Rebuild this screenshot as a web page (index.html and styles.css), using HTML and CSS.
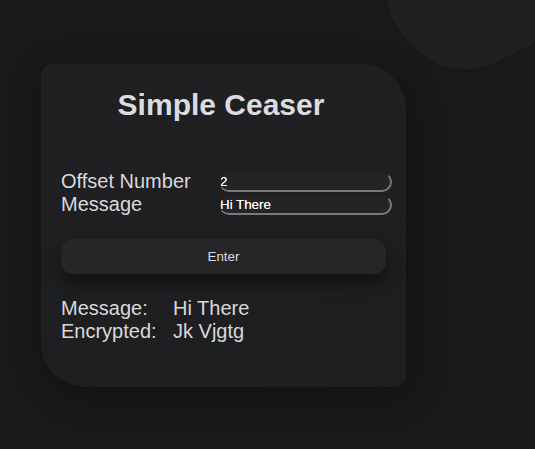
FILE: index.html
```html
<!DOCTYPE html>
<html>
<head>
<meta charset="utf-8">
<title>Simple Ceaser</title>
<link rel="stylesheet" href="styles.css">
</head>
<body>
<svg class="blob" width="157" height="72" viewBox="0 0 157 72" aria-hidden="true">
  <path d="M8 0 C18 35 45 65 82 69 C104 71 130 58 157 42 L157 0 Z" fill="#202022"/>
</svg>
<main class="card">
  <h1 class="title">Simple Ceaser</h1>
  <form class="form">
    <label class="label" for="offset">Offset Number</label>
    <input class="field" id="offset" type="text" value="2">
    <label class="label" for="msg">Message</label>
    <input class="field" id="msg" type="text" value="Hi There">
  </form>
  <button class="btn" type="button">Enter</button>
  <div class="result">
    <span>Message:</span><span>Hi There</span>
    <span>Encrypted:</span><span>Jk Vjgtg</span>
  </div>
</main>
</body>
</html>
```
FILE: styles.css
```css
html, body {
  margin: 0;
  padding: 0;
  background: #19191b;
  height: 100%;
  overflow: hidden;
}
body {
  position: relative;
  font-family: "Liberation Sans", Arial, sans-serif;
  color: #d9d9dd;
  padding: 64px 0 0 41px;
  box-sizing: border-box;
}
.blob {
  position: absolute;
  right: 0;
  top: 0;
  display: block;
}
.card {
  position: relative;
  box-sizing: border-box;
  width: 365px;
  height: 323px;
  padding: 24px 14px 0 20px;
  background: linear-gradient(160deg, #202022 0%, #1d1e20 100%);
  border-radius: 12px 45px 12px 45px;
  box-shadow: 4px 8px 30px rgba(0, 0, 0, 0.35);
}
.title {
  margin: 0;
  padding-right: 11px;
  font-size: 30px;
  line-height: 34px;
  font-weight: bold;
  text-align: center;
  color: #dcdce0;
}
.form {
  margin-top: 48px;
  display: grid;
  grid-template-columns: 158px 1fr;
  grid-auto-rows: 23px;
}
.label {
  font-size: 20px;
  line-height: 23px;
  color: #d9d9dd;
}
.field {
  align-self: center;
  box-sizing: border-box;
  height: 20px;
  margin: 0;
  padding: 0;
  width: 100%;
  background: #242426;
  color: #ffffff;
  font-family: "Liberation Sans", Arial, sans-serif;
  font-size: 13.33px;
  text-shadow: 0 0 0.6px rgba(255, 255, 255, 0.8);
  border: 2px solid;
  border-left-width: 1px;
  border-color: #222224 #7a7a7c #7a7a7c #242426;
  border-radius: 10px;
  outline: none;
}
.btn {
  display: block;
  margin-top: 23px;
  width: 325px;
  height: 35px;
  background: #262628;
  border: none;
  border-radius: 12px;
  color: #dadade;
  font-family: "Liberation Sans", Arial, sans-serif;
  font-size: 13.33px;
  box-shadow: 0 9px 18px rgba(0, 0, 0, 0.45);
}
.result {
  margin-top: 23px;
  display: grid;
  grid-template-columns: 112px 1fr;
  font-size: 20px;
  line-height: 23px;
  color: #d9d9dd;
}
```
